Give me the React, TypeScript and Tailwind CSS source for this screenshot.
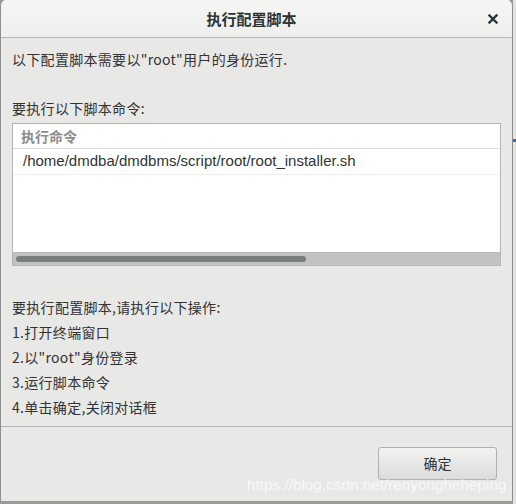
const cjk = { fontFamily: '"Noto Sans CJK SC", "Liberation Sans", sans-serif' };

function CloseIcon() {
  return (
    <svg width="10" height="10" viewBox="0 0 10 10" aria-hidden="true">
      <path d="M1.5 1.5 L8.5 8.5 M8.5 1.5 L1.5 8.5" stroke="#2e3436" strokeWidth="2.4" strokeLinecap="square" />
    </svg>
  );
}

const steps = ["1.打开终端窗口", '2.以"root"身份登录', "3.运行脚本命令", "4.单击确定,关闭对话框"];

export default function App() {
  return (
    <div className="relative h-[504px] w-[516px] overflow-hidden bg-[#9a9a9a]" style={cjk}>
      <div className="flex h-[501px] w-[513px] flex-col overflow-hidden rounded-t-[6px] border-x border-[#8f8f8f] bg-[#e8e8e7]">
        {/* title bar */}
        <header className="relative flex h-[38px] shrink-0 items-center justify-center border-b border-[#b6b6b3] bg-gradient-to-b from-[#f6f6f5] to-[#efefee] pr-[10px]">
          <h1 className="text-[15px] font-bold leading-none text-[#2e3436]">执行配置脚本</h1>
          <button className="absolute right-[14px] top-[14px] flex h-[10px] w-[10px] items-center justify-center">
            <CloseIcon />
          </button>
        </header>

        {/* content */}
        <main className="flex h-[389px] shrink-0 flex-col border-b border-[#b3b3b1] px-[11px] text-[14px] text-[#333333]">
          <p className="mt-[10px] leading-[22px] tracking-[0.3px]">以下配置脚本需要以"root"用户的身份运行.</p>
          <p className="mt-[27px] leading-[22px] tracking-[0.3px]">要执行以下脚本命令:</p>

          <div className="mt-[4px] flex h-[143px] w-[489px] flex-col border border-[#b5b5b3] bg-white">
            <div className="flex h-[25px] shrink-0 items-center border-b border-[#dedede] pl-[8px] text-[14px] font-bold text-[#8d8d8d]">
              执行命令
            </div>
            <div
              className="flex h-[26px] shrink-0 items-center border-b border-[#eeeeee] pl-[10px] text-[15px] text-[#2e3436]"
              style={{ fontFamily: '"Liberation Sans", sans-serif' }}
            >
              /home/dmdba/dmdbms/script/root/root_installer.sh
            </div>
            <div className="flex-1" />
            <div className="flex h-[13px] shrink-0 items-center border-t border-[#b8b8b6] bg-[#c2c2c1] px-[3px]">
              <div className="h-[6px] w-[290px] rounded-full bg-[#7a7e7e]" />
            </div>
          </div>

          <div className="mt-[29px] flex flex-col leading-[25px] tracking-[0.3px]">
            <p>要执行配置脚本,请执行以下操作:</p>
            {steps.map((s) => (
              <p key={s}>{s}</p>
            ))}
          </div>
        </main>

        {/* footer */}
        <footer className="flex flex-1 items-start justify-end bg-[#e8e8e7] pr-[15px] pt-[20px]">
          <button className="flex h-[33px] w-[119px] items-center justify-center rounded-[3px] border border-[#b0b0ae] bg-gradient-to-b from-[#f2f2f1] to-[#dcdcdb] text-[14px] text-[#2e3436]">
            确定
          </button>
        </footer>
      </div>

      {/* right edge of window behind */}
      <div className="absolute right-0 top-0 h-full w-[3px] bg-[#e3e3e2]">
        <div className="mt-[139px] h-[3px] w-full bg-[#3b6ea5]" />
      </div>

      {/* watermark */}
      <span
        className="absolute left-[247px] top-[475px] whitespace-nowrap text-[15.3px] leading-[20px] text-white/75"
        style={{ fontFamily: '"Liberation Sans", sans-serif' }}
      >
        https://blog.csdn.net/renyongheheping
      </span>
    </div>
  );
}
